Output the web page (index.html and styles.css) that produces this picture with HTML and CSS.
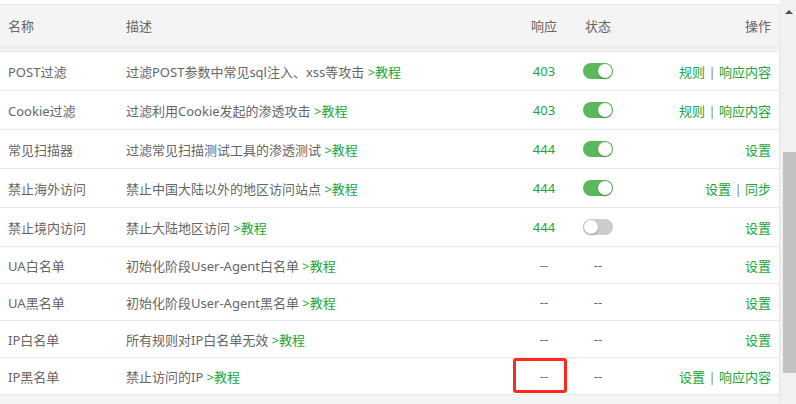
FILE: index.html
```html
<!DOCTYPE html>
<html lang="zh-CN">
<head>
  <meta charset="UTF-8" />
  <title>规则列表</title>
  <link rel="stylesheet" href="styles.css">
</head>
<body>
  <div class="page">
    <div class="table-box">
      <div class="row head">
        <div class="c-name">名称</div>
        <div class="c-desc">描述</div>
        <div class="c-resp">响应</div>
        <div class="c-state">状态</div>
        <div class="c-ops">操作</div>
      </div>
      <div class="head-shadow"></div>

      <div class="row tall">
        <div class="c-name">POST过滤</div>
        <div class="c-desc">过滤POST参数中常见sql注入、xss等攻击 <a class="link">&gt;教程</a></div>
        <div class="c-resp code">403</div>
        <div class="c-state"><span class="switch on"></span></div>
        <div class="c-ops"><a class="link">规则</a> <span class="sep">|</span> <a class="link">响应内容</a></div>
      </div>
      <div class="row tall">
        <div class="c-name">Cookie过滤</div>
        <div class="c-desc">过滤利用Cookie发起的渗透攻击 <a class="link">&gt;教程</a></div>
        <div class="c-resp code">403</div>
        <div class="c-state"><span class="switch on"></span></div>
        <div class="c-ops"><a class="link">规则</a> <span class="sep">|</span> <a class="link">响应内容</a></div>
      </div>
      <div class="row tall">
        <div class="c-name">常见扫描器</div>
        <div class="c-desc">过滤常见扫描测试工具的渗透测试 <a class="link">&gt;教程</a></div>
        <div class="c-resp code">444</div>
        <div class="c-state"><span class="switch on"></span></div>
        <div class="c-ops"><a class="link">设置</a></div>
      </div>
      <div class="row tall">
        <div class="c-name">禁止海外访问</div>
        <div class="c-desc">禁止中国大陆以外的地区访问站点 <a class="link">&gt;教程</a></div>
        <div class="c-resp code">444</div>
        <div class="c-state"><span class="switch on"></span></div>
        <div class="c-ops"><a class="link">设置</a> <span class="sep">|</span> <a class="link">同步</a></div>
      </div>
      <div class="row tall">
        <div class="c-name">禁止境内访问</div>
        <div class="c-desc">禁止大陆地区访问 <a class="link">&gt;教程</a></div>
        <div class="c-resp code">444</div>
        <div class="c-state"><span class="switch"></span></div>
        <div class="c-ops"><a class="link">设置</a></div>
      </div>
      <div class="row">
        <div class="c-name">UA白名单</div>
        <div class="c-desc">初始化阶段User-Agent白名单 <a class="link">&gt;教程</a></div>
        <div class="c-resp">--</div>
        <div class="c-state">--</div>
        <div class="c-ops"><a class="link">设置</a></div>
      </div>
      <div class="row">
        <div class="c-name">UA黑名单</div>
        <div class="c-desc">初始化阶段User-Agent黑名单 <a class="link">&gt;教程</a></div>
        <div class="c-resp">--</div>
        <div class="c-state">--</div>
        <div class="c-ops"><a class="link">设置</a></div>
      </div>
      <div class="row">
        <div class="c-name">IP白名单</div>
        <div class="c-desc">所有规则对IP白名单无效 <a class="link">&gt;教程</a></div>
        <div class="c-resp">--</div>
        <div class="c-state">--</div>
        <div class="c-ops"><a class="link">设置</a></div>
      </div>
      <div class="row">
        <div class="c-name">IP黑名单</div>
        <div class="c-desc">禁止访问的IP <a class="link">&gt;教程</a></div>
        <div class="c-resp marked">--<span class="mark"></span></div>
        <div class="c-state">--</div>
        <div class="c-ops"><a class="link">设置</a> <span class="sep">|</span> <a class="link">响应内容</a></div>
      </div>
    </div>

    <!-- scrollbar -->
    <div class="scrollbar">
      <span class="arrow"></span>
      <span class="thumb"></span>
    </div>
  </div>
</body>
</html>
```

FILE: styles.css
```css
body {
  margin: 0;
  background: #ffffff;
  font-family: "Noto Sans", "Noto Sans CJK SC", sans-serif;
  font-size: 13px;
  color: #666;
}

.page {
  display: flex;
  height: 404px;
  overflow: hidden;
}

.table-box {
  width: 779px;
  margin-top: 4px;
  border-top: 1px solid #e6e6e6;
  border-right: 1px solid #e6e6e6;
  background: #f4f4f4;
}

.row {
  display: grid;
  grid-template-columns: 126px 388px 60px 48px 1fr;
  align-items: center;
  height: 36px;
  background: #ffffff;
  border-bottom: 1px solid #e9e9e9;
}

.row.tall {
  height: 38px;
}

.row.head {
  height: 41px;
  background: #f4f4f4;
  border-bottom: none;
}

.head-shadow {
  height: 5px;
  background: linear-gradient(#e9e9e9, #f7f7f7);
  border-bottom: 1px solid #e6e6e6;
}

.c-name {
  padding-left: 8px;
  white-space: nowrap;
}

.c-desc {
  white-space: nowrap;
}

.c-resp,
.c-state {
  text-align: center;
  display: flex;
  justify-content: center;
  align-items: center;
}

.c-ops {
  text-align: right;
  padding-right: 8px;
  white-space: nowrap;
}

.link {
  color: #20a53a;
  cursor: pointer;
}

.sep {
  color: #888;
}

.code {
  color: #20a53a;
}

.switch {
  position: relative;
  display: inline-block;
  width: 30px;
  height: 16px;
  border-radius: 8px;
  background: #cccccc;
}

.switch::after {
  content: "";
  position: absolute;
  top: 1px;
  left: 1px;
  width: 14px;
  height: 14px;
  border-radius: 50%;
  background: #ffffff;
  box-shadow: 0 1px 2px rgba(0,0,0,0.3);
}

.switch.on {
  background: #5cb85c;
}

.switch.on::after {
  left: 15px;
}

/* red highlight box */
.marked {
  position: relative;
  height: 100%;
}

.mark {
  position: absolute;
  left: -1px;
  top: 0;
  width: 48px;
  height: 29px;
  border: 3px solid #fe2a1d;
  border-radius: 3px;
}

.scrollbar {
  position: relative;
  width: 16px;
  background: #f1f1f1;
}

.arrow {
  position: absolute;
  left: 5px;
  top: 10px;
  border-left: 4px solid transparent;
  border-right: 4px solid transparent;
  border-bottom: 4px solid #505050;
}

.thumb {
  position: absolute;
  left: 3px;
  right: 0;
  top: 152px;
  height: 221px;
  background: #c1c1c1;
}
```
